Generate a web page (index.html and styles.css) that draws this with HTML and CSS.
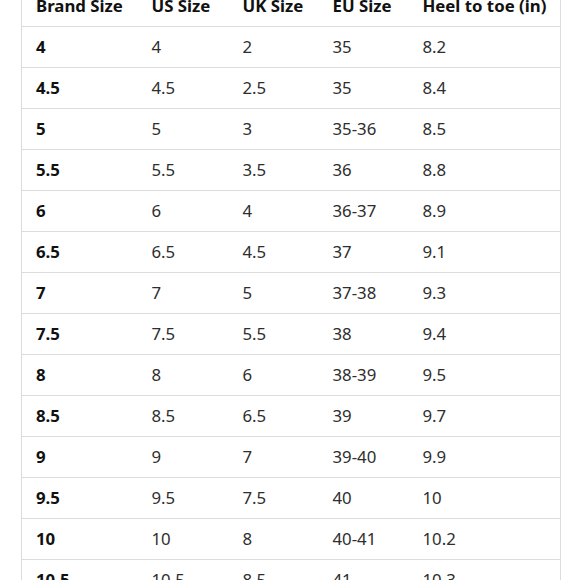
FILE: index.html
```html
<!DOCTYPE html>
<html>
<head>
<meta charset="utf-8">
<link rel="stylesheet" href="styles.css">
</head>
<body>
<div class="wrap">
<table class="sizes">
<colgroup><col class="c1"><col class="c2"><col class="c3"><col class="c4"><col class="c5"></colgroup>
<thead>
<tr><th>Brand Size</th><th>US Size</th><th>UK Size</th><th>EU Size</th><th>Heel to toe (in)</th></tr>
</thead>
<tbody>
<tr><th>4</th><td>4</td><td>2</td><td>35</td><td>8.2</td></tr>
<tr><th>4.5</th><td>4.5</td><td>2.5</td><td>35</td><td>8.4</td></tr>
<tr><th>5</th><td>5</td><td>3</td><td>35-36</td><td>8.5</td></tr>
<tr><th>5.5</th><td>5.5</td><td>3.5</td><td>36</td><td>8.8</td></tr>
<tr><th>6</th><td>6</td><td>4</td><td>36-37</td><td>8.9</td></tr>
<tr><th>6.5</th><td>6.5</td><td>4.5</td><td>37</td><td>9.1</td></tr>
<tr><th>7</th><td>7</td><td>5</td><td>37-38</td><td>9.3</td></tr>
<tr><th>7.5</th><td>7.5</td><td>5.5</td><td>38</td><td>9.4</td></tr>
<tr><th>8</th><td>8</td><td>6</td><td>38-39</td><td>9.5</td></tr>
<tr><th>8.5</th><td>8.5</td><td>6.5</td><td>39</td><td>9.7</td></tr>
<tr><th>9</th><td>9</td><td>7</td><td>39-40</td><td>9.9</td></tr>
<tr><th>9.5</th><td>9.5</td><td>7.5</td><td>40</td><td>10</td></tr>
<tr><th>10</th><td>10</td><td>8</td><td>40-41</td><td>10.2</td></tr>
<tr><th>10.5</th><td>10.5</td><td>8.5</td><td>41</td><td>10.3</td></tr>
</tbody>
</table>
</div>
</body>
</html>
```
FILE: styles.css
```css
html, body {
  margin: 0;
  padding: 0;
  background: #fff;
}
.wrap {
  padding-left: 21px;
  margin-top: -15px;
}
.sizes {
  border-collapse: collapse;
  table-layout: fixed;
  width: 540px;
  font-family: "Noto Sans", "Open Sans", sans-serif;
  font-size: 16.8px;
  color: #111;
  border-left: 1px solid #dcdcdc;
  border-right: 1px solid #dcdcdc;
}
.c1 { width: 116px; }
.c2 { width: 91px; }
.c3 { width: 90px; }
.c4 { width: 90px; }
.sizes th, .sizes td {
  height: 41px;
  padding: 0 0 0 14px;
  text-align: left;
  vertical-align: middle;
  border-bottom: 1px solid #dcdcdc;
  box-sizing: border-box;
}
.sizes th {
  font-weight: 700;
  color: #111;
}
.sizes td {
  font-weight: 400;
  color: #2e2e2e;
}
```
